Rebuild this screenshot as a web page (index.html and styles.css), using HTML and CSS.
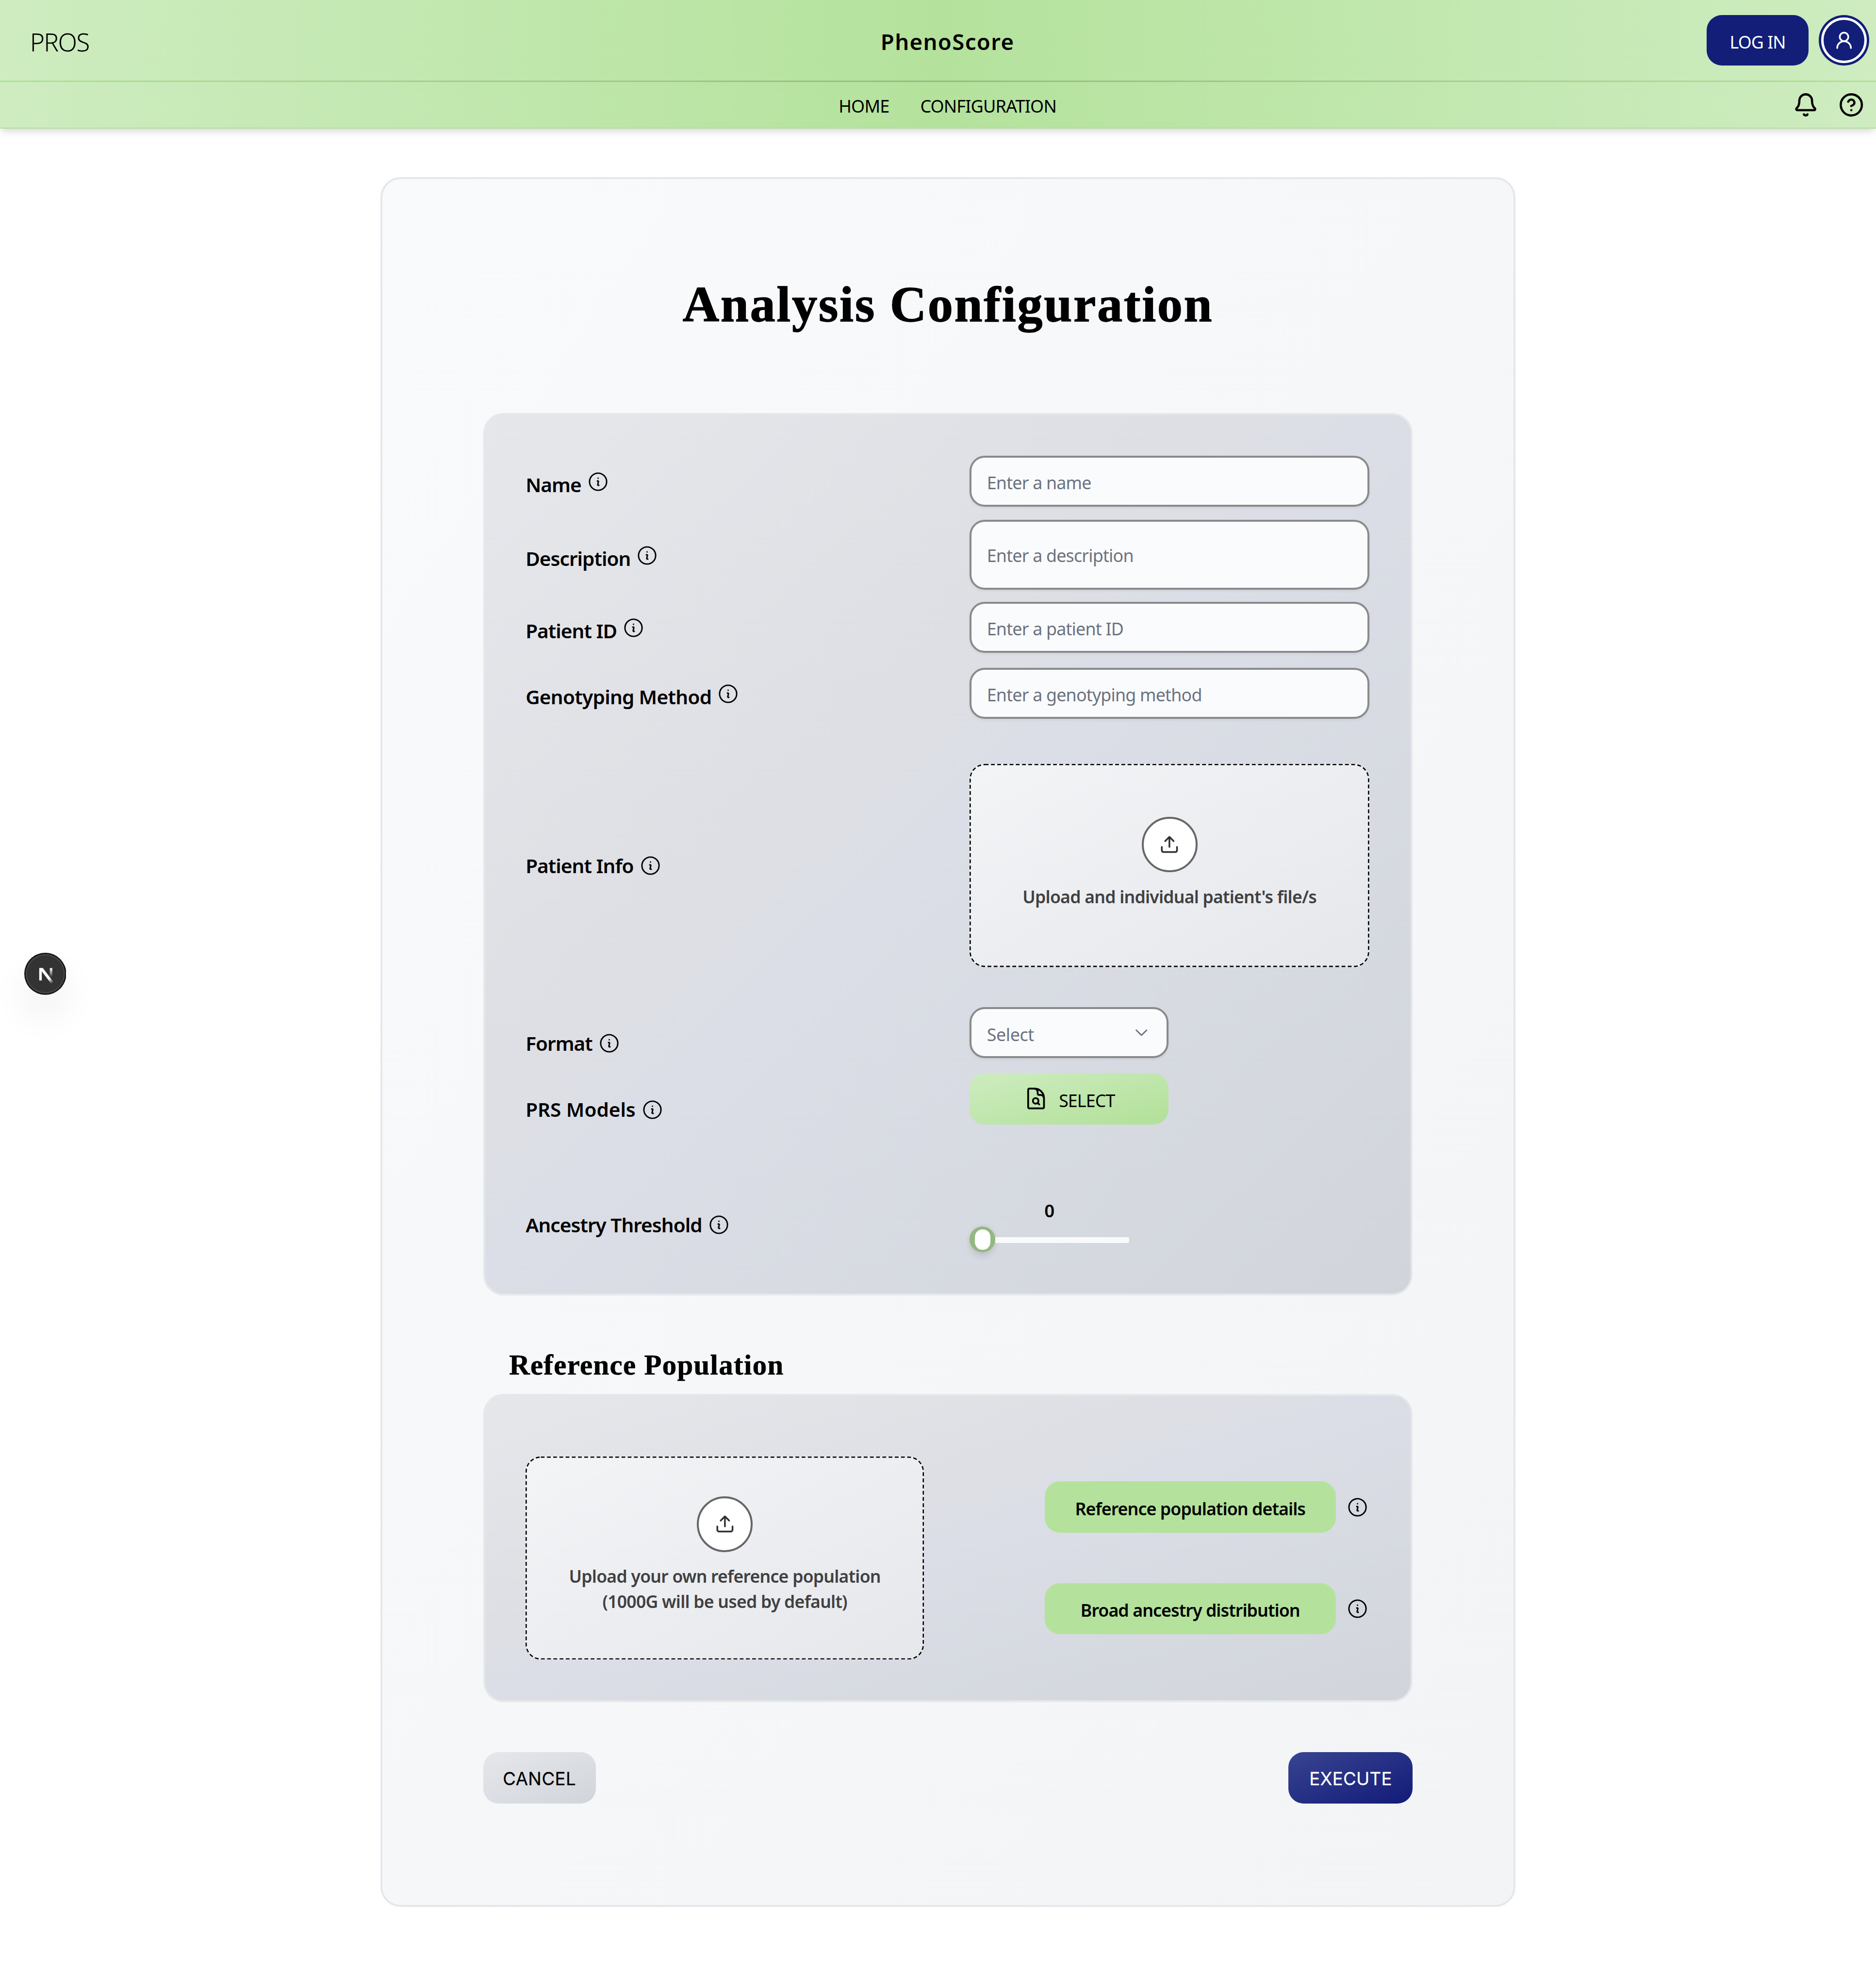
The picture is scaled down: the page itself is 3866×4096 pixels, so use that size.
FILE: index.html
```html
<!DOCTYPE html>
<html lang="en">
<head>
<meta charset="utf-8">
<title>PhenoScore</title>
<link rel="stylesheet" href="styles.css">
</head>
<body>
<svg class="defs" aria-hidden="true">
  <symbol id="info" viewBox="0 0 24 24"><path d="m11.25 11.25.041-.02a.75.75 0 0 1 1.063.852l-.708 2.836a.75.75 0 0 0 1.063.853l.041-.021M21 12a9 9 0 1 1-18 0 9 9 0 0 1 18 0Zm-9-3.75h.008v.008H12V8.25Z"/></symbol>
  <symbol id="upload" viewBox="0 0 24 24"><path d="M21 15v4a2 2 0 0 1-2 2H5a2 2 0 0 1-2-2v-4M17 8l-5-5-5 5M12 3v12"/></symbol>
</svg>

<header class="header">
  <div class="topbar">
    <span class="org">PROS</span>
    <span class="brand">PhenoScore</span>
    <div class="account">
      <button class="login"><span>LOG IN</span></button>
      <div class="avatar"><div class="avatar-ring">
        <svg class="icon-user" viewBox="0 0 24 24"><circle cx="12" cy="8" r="5"/><path d="M20 21a8 8 0 0 0-16 0"/></svg>
      </div></div>
    </div>
  </div>
  <div class="divider"></div>
  <div class="navbar">
    <nav class="nav"><a>HOME</a><a>CONFIGURATION</a></nav>
    <div class="tools">
      <svg class="icon-tool" viewBox="0 0 24 24"><path d="M10.268 21a2 2 0 0 0 3.464 0"/><path d="M3.262 15.326A1 1 0 0 0 4 17h16a1 1 0 0 0 .74-1.673C19.41 13.956 18 12.499 18 8A6 6 0 0 0 6 8c0 4.499-1.411 5.956-2.738 7.326"/></svg>
      <svg class="icon-tool" viewBox="0 0 24 24"><circle cx="12" cy="12" r="10"/><path d="M9.09 9a3 3 0 0 1 5.83 1c0 2-3 3-3 3"/><path d="M12 17h.01"/></svg>
    </div>
  </div>
</header>

<main class="card">
  <h1 class="title">Analysis Configuration</h1>

  <section class="panel panel-form">
    <div class="row row-name">
      <label class="label raised"><span>Name</span><svg class="info"><use href="#info"/></svg></label>
      <div class="field"><span>Enter a name</span></div>
    </div>
    <div class="row row-description">
      <label class="label raised"><span>Description</span><svg class="info"><use href="#info"/></svg></label>
      <div class="field"><span>Enter a description</span></div>
    </div>
    <div class="row row-patient">
      <label class="label raised"><span>Patient ID</span><svg class="info"><use href="#info"/></svg></label>
      <div class="field"><span>Enter a patient ID</span></div>
    </div>
    <div class="row row-method">
      <label class="label raised"><span>Genotyping Method</span><svg class="info"><use href="#info"/></svg></label>
      <div class="field"><span>Enter a genotyping method</span></div>
    </div>
    <div class="row row-upload">
      <label class="label"><span>Patient Info</span><svg class="info"><use href="#info"/></svg></label>
      <div class="dropzone">
        <svg class="dashes"><rect/></svg>
        <div class="disc"><svg class="icon-upload"><use href="#upload"/></svg></div>
        <p>Upload and individual patient's file/s</p>
      </div>
    </div>
    <div class="row row-format">
      <label class="label lowered"><span>Format</span><svg class="info"><use href="#info"/></svg></label>
      <div class="field select"><span>Select</span><svg class="chevron" viewBox="0 0 9.4 5.2"><path d="M.6.6 4.7 4.6 8.8.6"/></svg></div>
    </div>
    <div class="row row-models">
      <label class="label lowered"><span>PRS Models</span><svg class="info"><use href="#info"/></svg></label>
      <button class="models">
        <svg class="icon-file" viewBox="0 0 24 24"><path d="M19.5 14.25v-2.625a3.375 3.375 0 0 0-3.375-3.375h-1.5A1.125 1.125 0 0 1 13.5 7.125v-1.5a3.375 3.375 0 0 0-3.375-3.375H8.25m5.231 13.481L15 17.25m-4.5-15H5.625c-.621 0-1.125.504-1.125 1.125v16.5c0 .621.504 1.125 1.125 1.125h12.75c.621 0 1.125-.504 1.125-1.125V11.25a9 9 0 0 0-9-9Zm3.75 11.625a2.625 2.625 0 1 1-5.25 0 2.625 2.625 0 0 1 5.25 0Z"/></svg>
        <span>SELECT</span>
      </button>
    </div>
    <div class="row row-threshold">
      <label class="label"><span>Ancestry Threshold</span><svg class="info"><use href="#info"/></svg></label>
      <div class="threshold">
        <output>0</output>
        <div class="slider"><div class="thumb"><div class="thumb-core"></div></div><div class="track"></div></div>
      </div>
    </div>
  </section>

  <h2 class="subtitle">Reference Population</h2>

  <section class="panel panel-population">
    <div class="dropzone">
      <svg class="dashes"><rect/></svg>
      <div class="disc"><svg class="icon-upload"><use href="#upload"/></svg></div>
      <p>Upload your own reference population<br>(1000G will be used by default)</p>
    </div>
    <div class="links">
      <div class="link"><button><span>Reference population details</span></button><svg class="info"><use href="#info"/></svg></div>
      <div class="link"><button><span>Broad ancestry distribution</span></button><svg class="info"><use href="#info"/></svg></div>
    </div>
  </section>

  <footer class="actions">
    <button class="cancel">CANCEL</button>
    <button class="execute">EXECUTE</button>
  </footer>
</main>

<div class="devbadge">
  <svg viewBox="0 0 346 346">
    <defs>
      <linearGradient id="g1" x1="0" y1="0" x2="0" y2="1"><stop offset="0" stop-color="#fff"/><stop offset="1" stop-color="#fff" stop-opacity="0"/></linearGradient>
      <linearGradient id="g2" gradientUnits="userSpaceOnUse" x1="206" y1="212" x2="234" y2="250"><stop offset="0" stop-color="#fff"/><stop offset="1" stop-color="#fff" stop-opacity="0"/></linearGradient>
    </defs>
    <circle cx="173" cy="173" r="173" fill="#171717"/>
    <circle cx="173" cy="173" r="161" fill="#4b4b4b"/>
    <circle cx="173" cy="173" r="152" fill="#333"/>
    <path d="M123 126h21v102h-21z" fill="#fff"/>
    <path d="M210 126h21v74h-21z" fill="url(#g1)"/>
    <path d="M128 126h25L240 240q-9 10-19 14L128 132z" fill="url(#g2)"/>
  </svg>
</div>
</body>
</html>
```
FILE: styles.css
```css
/* 1rem = 10 layout units */
html { font-size: 26.122px; }
* { box-sizing: border-box; margin: 0; padding: 0; }
body {
  width: 148rem; height: 4096px; overflow: hidden; position: relative;
  background: #fff; color: #000;
  font-family: "Noto Sans", "Open Sans", sans-serif; font-size: 1.4rem;
}
button { border: 0; font: inherit; color: inherit; display: flex; align-items: center; justify-content: center; }
svg { display: block; fill: none; stroke: currentColor; stroke-linecap: round; stroke-linejoin: round; flex: none; }
.defs { position: absolute; width: 0; height: 0; }

/* header */
.header {
  height: 10.15rem; border-bottom: .1rem solid #b1e09a;
  background: linear-gradient(to right, #ceecc0, #b4e29c 50%, #ceecc0) padding-box;
  box-shadow: 0 .4rem .6rem -.1rem rgba(0,0,0,.1), 0 .2rem .4rem -.2rem rgba(0,0,0,.1);
}
.topbar, .navbar { display: grid; grid-template-columns: 1fr auto 1fr; align-items: center; padding-left: 1.5rem; }
.topbar { height: 6.36rem; }
.org { padding: .26rem 0 0 .86rem; font-size: 1.97rem; font-weight: 300; letter-spacing: -.065rem; }
.brand { padding-top: .15rem; font-size: 1.74rem; font-weight: 600; letter-spacing: .053rem; }
.account { display: flex; justify-content: flex-end; gap: .8rem; padding-right: .52rem; }
.login {
  width: 8.02rem; height: 4.01rem; border-radius: 1.2rem; background: #121e78; color: #fff;
  font-size: 1.37rem; font-weight: 400; letter-spacing: -.036rem;
}
.login span { padding-top: .2rem; }
.avatar { width: 4.01rem; height: 4.01rem; border-radius: 50%; background: #121e78; padding: .2rem; color: #fff; }
.avatar-ring { height: 100%; border: .2rem solid #fff; border-radius: 50%; display: flex; align-items: center; justify-content: center; }
.icon-user { width: 1.62rem; height: 1.62rem; stroke-width: 2; }
.divider { height: .12rem; background: linear-gradient(to right, #afe195, #96bb82 50%, #b1e098); }
.navbar { height: 3.57rem; }
.nav { grid-column: 2; display: flex; gap: 2.45rem; padding-top: .13rem; font-size: 1.38rem; letter-spacing: -.033rem; }
.tools { display: flex; justify-content: flex-end; gap: 1.6rem; padding-right: .96rem; }
.icon-tool { width: 2rem; height: 2rem; stroke-width: 2.1; }

/* page card */
.card {
  width: 89.53rem; height: 136.42rem; margin: 3.84rem 0 0 30.02rem; padding: 0 7.94rem;
  border: .17rem solid #e5e7eb; border-radius: 1.6rem;
  background: linear-gradient(to bottom right, #f9fafc, #f2f4f6);
}
.title {
  height: 18.45rem; padding-top: 7.5rem; text-align: center;
  font: bold 4rem/4.8rem "Liberation Serif", serif; letter-spacing: .1rem;
  -webkit-text-stroke: .05rem #000;
}
.subtitle {
  height: 7.76rem; padding: 4.32rem 0 0 2.05rem;
  font: bold 2.25rem/2.4rem "Liberation Serif", serif; letter-spacing: .052rem;
  -webkit-text-stroke: .025rem #000;
}
.panel {
  border: .17rem solid #e5e7eb; border-radius: 1.6rem; padding: 0 3.27rem 0 3.2rem;
  background: linear-gradient(to bottom right, #e5e7eb, #dedfe4 38%, #dbdee6 48%, #d1d5db);
}
.panel-form { height: 69.58rem; padding-top: 3.2rem; }

/* form rows */
.row { display: flex; justify-content: space-between; align-items: center; height: 4.02rem; }
.row-description { height: 5.54rem; margin-top: 1.02rem; }
.row-patient { margin-top: .94rem; }
.row-method { margin-top: 1.19rem; }
.row-upload { height: 16.02rem; margin-top: 3.58rem; }
.row-format { margin-top: 3.16rem; }
.row-models { margin-top: 1.2rem; }
.row-threshold { height: 5.2rem; margin-top: 5.32rem; }
.label { display: flex; align-items: center; gap: .42rem; font-size: 1.55rem; font-weight: 600; letter-spacing: -.036rem; line-height: 2rem; }
.raised { padding-top: .1rem; }
.raised span { padding-top: .5rem; }
.lowered { padding-top: 1.68rem; }
.row-method .label { letter-spacing: -.026rem; }
.row-models .label { letter-spacing: 0; }
.info { width: 1.8rem; height: 1.8rem; stroke-width: 1.5; }
.field {
  width: 31.53rem; height: 100%; padding: .22rem 1.2rem 0; display: flex; align-items: center;
  border: .17rem solid #8a8a8c; border-radius: 1.2rem; background: #fafbfc; color: #6b7280;
  font-size: 1.37rem; letter-spacing: -.03rem; box-shadow: 0 .1rem .2rem rgba(0,0,0,.06);
}
.row-description .field { padding-top: .1rem; }
.select { width: 15.68rem; margin-right: 15.85rem; justify-content: space-between; padding-right: 1.52rem; letter-spacing: -.015rem; }
.chevron { width: .94rem; height: .52rem; stroke-width: 1.1; margin-top: -.2rem; }
.models {
  width: 15.68rem; height: 4.06rem; margin-right: 15.85rem; gap: .8rem; border-radius: 1.2rem;
  background: linear-gradient(to bottom right, #ceecc0, #b1e098);
  font-size: 1.37rem; letter-spacing: -.034rem;
}
.models span { padding-top: .2rem; }
.icon-file { width: 2rem; height: 2rem; stroke-width: 1.7; }

/* upload areas */
.dropzone {
  position: relative; width: 31.53rem; height: 16.02rem; padding: 4.14rem 0 0;
  display: flex; flex-direction: column; align-items: center;
  border-radius: 1.2rem; background: linear-gradient(to bottom right, #f3f4f6, #e5e7eb);
  color: #404042; font-size: 1.36rem; font-weight: 600; letter-spacing: -.028rem; line-height: 2rem; text-align: center;
}
.dashes { position: absolute; inset: 0; width: 100%; height: 100%; color: #000; }
.dashes rect {
  x: .05rem; y: .05rem; width: 31.43rem; height: 15.92rem; rx: 1.15rem;
  stroke-width: .1rem; stroke-dasharray: .3rem .19rem; stroke-linecap: butt;
}
.disc {
  width: 4.4rem; height: 4.4rem; border: .17rem solid #666668; border-radius: 50%;
  background: #fff; color: #2f2f31; display: flex; align-items: center; justify-content: center;
}
.icon-upload { width: 1.6rem; height: 1.6rem; stroke-width: 2; }
.dropzone p { margin-top: .9rem; }

/* threshold slider */
.threshold { width: 12.58rem; margin-right: 18.95rem; text-align: center; font-weight: 600; }
.threshold output { display: block; height: 2.27rem; line-height: 2rem; margin-top: .05rem; }
.slider { display: flex; align-items: center; }
.thumb {
  width: 2.03rem; height: 2.03rem; border-radius: 50%; background: #93b880; display: flex; align-items: center; justify-content: center;
  box-shadow: 0 .4rem .6rem -.1rem rgba(0,0,0,.1), 0 0 .4rem rgba(0,0,0,.07);
}
.thumb-core { width: 1.22rem; height: 1.62rem; border-radius: .6rem; background: #fff; }
.track { flex: 1; height: .44rem; background: #f9fafc; border-radius: 0 .15rem .15rem 0; margin-top: .08rem; }

/* reference population */
.panel-population { height: 24.32rem; padding-top: 4.8rem; display: flex; justify-content: space-between; align-items: flex-start; }
.panel-population .dropzone { width: 31.43rem; padding-top: 3.13rem; }
.panel-population .dashes rect { width: 31.33rem; }
.links { display: flex; flex-direction: column; gap: 3.98rem; padding: 1.97rem .04rem 0 0; }
.link { display: flex; align-items: center; gap: .82rem; }
.link button {
  width: 22.96rem; height: 4.04rem; border-radius: 1.2rem; background: #b4e29c;
  font-size: 1.37rem; font-weight: 600; letter-spacing: -.036rem;
}
.link button span { padding-top: .2rem; }

/* actions */
.actions { margin-top: 3.94rem; display: flex; justify-content: space-between; font: 400 1.4rem "Inter", sans-serif; }
.actions button { height: 4.06rem; border-radius: 1.2rem; padding-top: .14rem; }
.cancel { width: 8.89rem; background: linear-gradient(to bottom right, #e5e7eb, #d1d5db); letter-spacing: .018rem; -webkit-text-stroke: .01rem; }
.execute { width: 9.8rem; background: linear-gradient(to bottom right, #394491, #121b78); color: #fff; letter-spacing: .012rem; -webkit-text-stroke: .01rem; }

.devbadge {
  position: absolute; left: 1.9rem; top: 75.14rem; width: 3.32rem; height: 3.32rem; border-radius: 50%;
  box-shadow: 0 1.6rem 3.2rem -.8rem rgba(0,0,0,.24);
}
.devbadge svg { width: 100%; height: 100%; stroke: none; }
```
